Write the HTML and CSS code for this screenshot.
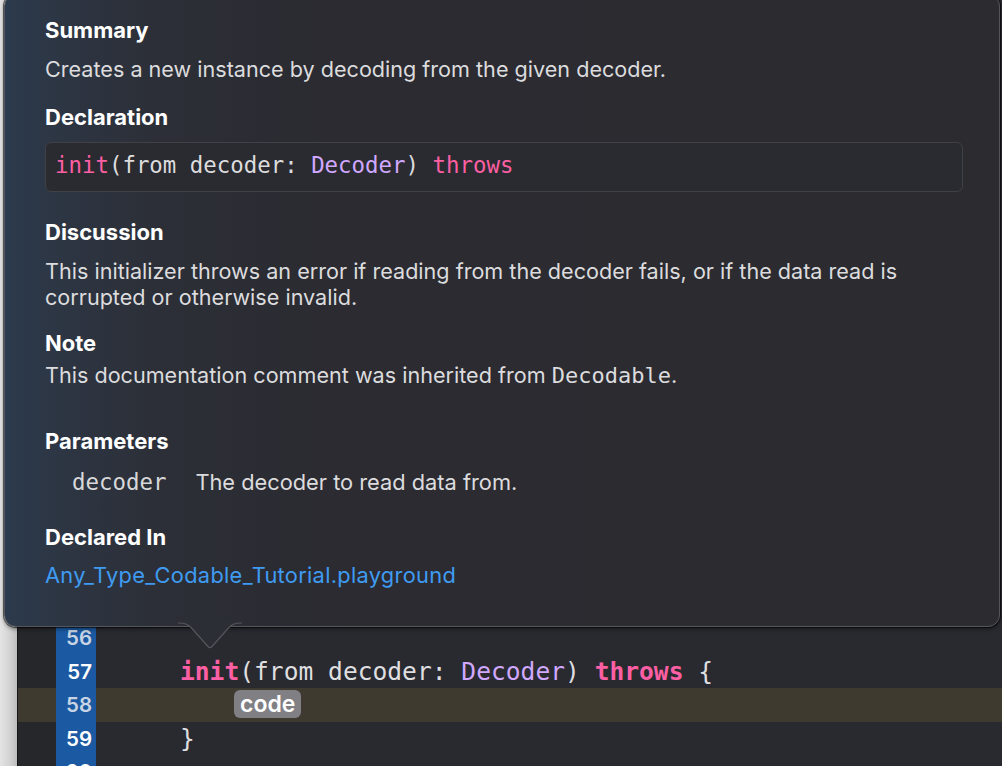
FILE: index.html
```html
<!DOCTYPE html>
<html lang="en">
<head>
<meta charset="utf-8">
<title>Quick Help – init(from:)</title>
<link rel="stylesheet" href="styles.css">
</head>
<body>
<div class="window">
  <div class="editor">
    <div class="row"><span class="margin"></span><span class="num dim">56</span><span class="code"></span></div>
    <div class="row"><span class="margin"></span><span class="num">57</span><span class="code"><span class="kw">init</span>(from decoder: <span class="type">Decoder</span>) <span class="kw">throws</span> {</span></div>
    <div class="row current"><span class="margin"></span><span class="num dim">58</span><span class="code"><span class="token">code</span></span></div>
    <div class="row"><span class="margin"></span><span class="num">59</span><span class="code">}</span></div>
    <div class="row"><span class="margin"></span><span class="num">60</span><span class="code"></span></div>
  </div>

  <div class="popover">
    <section class="sec sec-summary">
      <h3 class="h">Summary</h3>
      <p class="p">Creates a new instance by decoding from the given decoder.</p>
    </section>
    <section class="sec sec-decl">
      <h3 class="h">Declaration</h3>
      <div class="decl"><span class="kwp">init</span>(from decoder: <span class="typep">Decoder</span>) <span class="kwp">throws</span></div>
    </section>
    <section class="sec sec-disc">
      <h3 class="h">Discussion</h3>
      <p class="p">This initializer throws an error if reading from the decoder fails, or if the data read is corrupted or otherwise invalid.</p>
    </section>
    <section class="sec sec-note">
      <h3 class="h h-tight">Note</h3>
      <p class="p">This documentation comment was inherited from <span class="mono">Decodable</span>.</p>
    </section>
    <section class="sec sec-params">
      <h3 class="h h-loose">Parameters</h3>
      <div class="param"><span class="pname">decoder</span><span class="pdesc">The decoder to read data from.</span></div>
    </section>
    <section class="sec sec-decin">
      <h3 class="h h-link">Declared In</h3>
      <a class="link" href="#">Any_Type_Codable_Tutorial.playground</a>
    </section>
    <svg class="arrow" width="64" height="30" viewBox="0 0 64 30" aria-hidden="true">
      <path class="arrow-fill" d="M0,-2 L0,1 C8,1 10,2.5 14,6.5 L30,24.5 Q32,26.8 34,24.5 L50,6.5 C54,2.5 56,1 64,1 L64,-2 Z"/>
      <path class="arrow-line" d="M0,1 C8,1 10,2.5 14,6.5 L30,24.5 Q32,26.8 34,24.5 L50,6.5 C54,2.5 56,1 64,1"/>
    </svg>
  </div>
</div>
</body>
</html>
```

FILE: styles.css
```css
* { box-sizing: border-box; }

html, body {
  margin: 0;
  padding: 0;
}

body {
  width: 1002px;
  height: 766px;
  overflow: hidden;
  background: linear-gradient(to right, #e4e4e4 0px, #d2d2d2 10px, #bdbdbd 17px);
  font-family: Inter, "Noto Sans", sans-serif;
}

.window {
  position: relative;
  width: 1002px;
  height: 766px;
}

/* ---------- editor ---------- */
.editor {
  margin-left: 17px;
  height: 766px;
  padding-top: 621px;
  background: #292a30;
  border-left: 1px solid #151517;
}

.row {
  display: grid;
  grid-template-columns: 38px 40px 1fr;
  height: 33.5px;
  line-height: 33.5px;
}

.row .margin { background: #26272b; }
.row.current { background: #3f3a2f; }
.row.current .margin { background: #3f3a2f; }

.num {
  background: #1b5aa2;
  color: #ffffff;
  font-family: Inter, sans-serif;
  font-weight: 600;
  font-size: 20.5px;
  text-align: right;
  padding-right: 4px;
}
.num.dim { color: #c8d4e4; }

.code {
  font-family: "DejaVu Sans Mono", monospace;
  font-size: 24.6px;
  color: #dfdfe0;
  white-space: pre;
  padding-left: 84px;
}
.kw { color: #fc5fa3; font-weight: 700; }
.type { color: #d0a8ff; }

.token {
  display: inline-block;
  margin-left: 54px;
  height: 28px;
  line-height: 28px;
  padding: 0 6px;
  border-radius: 6px;
  background: #7f7f84;
  color: #ffffff;
  font-family: Inter, sans-serif;
  font-weight: 600;
  font-size: 23px;
  vertical-align: 1px;
}

/* ---------- popover ---------- */
.popover {
  position: absolute;
  left: 4px;
  top: -6px;
  width: 996px;
  height: 633px;
  padding: 22px 36px 0 40px;
  border-radius: 12px;
  border: 1px solid #55565b;
  box-shadow: 0 0 0 1px rgba(0,0,0,0.55), 0 2px 4px rgba(0,0,0,0.45);
  background:
    linear-gradient(to right, #2b3a4d 0px, #2d3644 50px, #2c2f37 150px, #2b2b31 320px, #2b2b30 1000px);
  color: #dedee0;
}

.sec { margin: 0; }
.sec-decl { margin-top: 22px; }
.sec-disc { margin-top: 27px; }
.sec-note { margin-top: 20px; }
.sec-params { margin-top: 39px; }
.sec-decin { margin-top: 29px; }

.h {
  margin: 0 0 13px 0;
  font-size: 22px;
  line-height: 26px;
  font-weight: 700;
  color: #ffffff;
}
.h-tight { margin-bottom: 6px; }
.h-loose { margin-bottom: 15px; }
.h-link { margin-bottom: 12px; }

.p {
  margin: 0;
  font-size: 21.6px;
  line-height: 26px;
  color: #dcdcde;
}

.mono {
  font-family: "DejaVu Sans Mono", monospace;
  font-size: 22px;
}

.decl {
  margin-top: -1px;
  height: 50px;
  padding: 0 9px;
  border: 1.5px solid #404147;
  border-radius: 6px;
  background: #2a2b30;
  font-family: "DejaVu Sans Mono", monospace;
  font-size: 22.4px;
  line-height: 45px;
  color: #dcdcde;
  white-space: pre;
}
.kwp { color: #fc5fa3; }
.typep { color: #d0a8ff; }

.param {
  display: flex;
  gap: 29px;
  padding-left: 27px;
  line-height: 26px;
}
.pname {
  font-family: "DejaVu Sans Mono", monospace;
  font-size: 22.4px;
  color: #d8d8da;
}
.pdesc {
  font-size: 21.8px;
  color: #dcdcde;
}

.link {
  display: block;
  font-size: 21.8px;
  letter-spacing: 0.3px;
  line-height: 26px;
  color: #3f9bf2;
  text-decoration: none;
}

.arrow {
  position: absolute;
  left: 173px;
  bottom: -26px;
  overflow: visible;
}
.arrow-fill { fill: #2c2e35; }
.arrow-line { fill: none; stroke: #55565b; stroke-width: 1.2; }
```
